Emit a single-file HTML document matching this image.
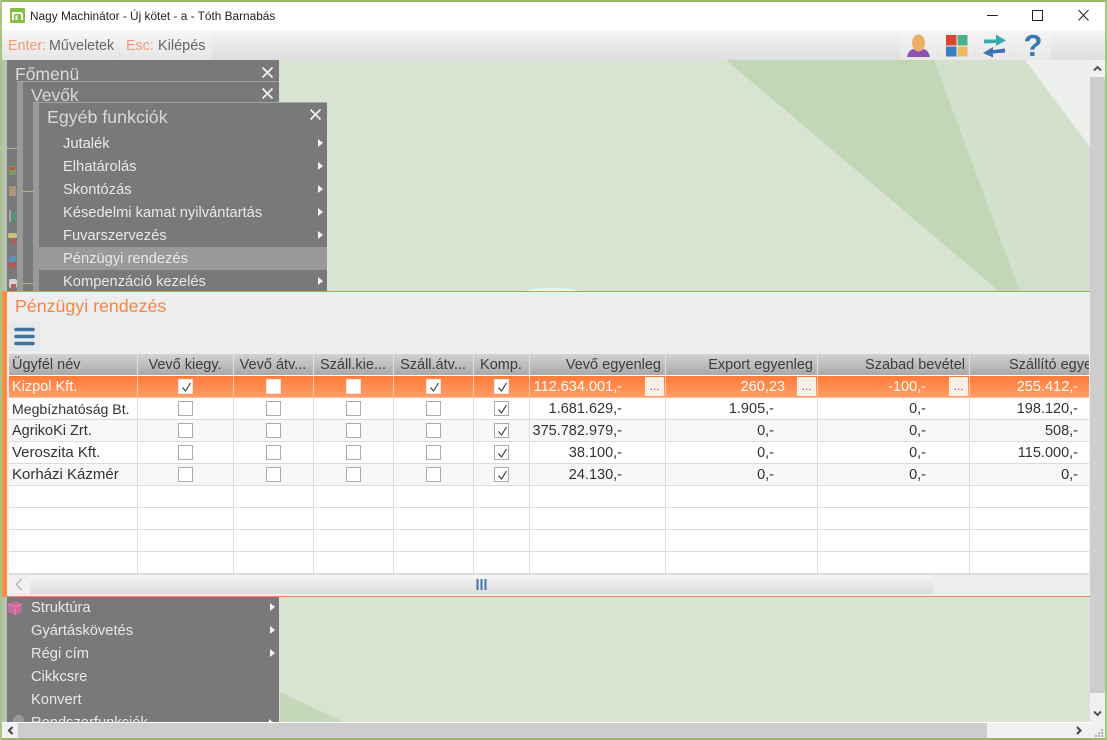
<!DOCTYPE html>
<html lang="hu">
<head>
<meta charset="utf-8">
<title>Nagy Machinátor</title>
<style>
*{box-sizing:border-box}
html,body{margin:0;padding:0;width:1107px;height:740px;overflow:hidden;background:#fff;font-family:"Liberation Sans",Arial,sans-serif}
.a{position:absolute}
#frame{position:absolute;left:0;top:0;width:1107px;height:740px;overflow:hidden;background:#fff}
.menu{position:absolute;background:#797979;overflow:hidden}
.hd{position:absolute;color:#d9d9d9;white-space:nowrap;line-height:20px}
.it{position:absolute;height:23px;line-height:23px;font-size:14.7px;color:#e8e8e8;white-space:nowrap}
.tri{position:absolute;width:0;height:0;border-left:5px solid #f4f4f4;border-top:4px solid transparent;border-bottom:4px solid transparent}
table{border-collapse:separate;border-spacing:0;table-layout:fixed;position:absolute;left:9px;top:354px;width:1080px;font-size:14.5px;color:#333}
th{height:22px;padding:0 4px 0 3px;font-weight:normal;color:#3d3d3d;background:linear-gradient(#d2d2d2,#a9a9a9);border-right:1px solid #e2e2e2;border-bottom:1px solid #fff;white-space:nowrap;overflow:hidden;text-align:center}
td{height:22px;padding:0;border-right:1px solid #dcdcdc;border-bottom:1px solid #dcdcdc;white-space:nowrap;overflow:hidden;background:#fff;position:relative}
tr.alt td{background:#f7f7f7}
tr.sel td{background:linear-gradient(#ff7b39,#ff9c66);color:#fff;border-right-color:#f8c8aa;border-bottom-color:#f4c0a0}
td.n{padding-left:3px}
td.c{text-align:center}
td.r{text-align:right;padding-right:43px}
.cb{display:block;width:15px;height:15px;margin:0 auto;border:1px solid #ababab;background:#fff;position:relative}
tr.sel .cb{border-color:#e8e8e8}
.cb svg{position:absolute;left:1px;top:1px}
.dot{position:absolute;right:1px;top:1px;width:19px;height:19px;background:#fcefe8;color:#666;font-size:12px;line-height:18px;text-align:center}
</style>
</head>
<body>
<div id="frame">
  <!-- desktop background -->
  <svg class="a" style="left:0;top:60px" width="1107" height="663" viewBox="0 60 1107 663">
    <rect x="0" y="60" width="1107" height="663" fill="#d8e3d2"/>
    <polygon points="934,60 1025,60 1090,147 1090,292 1020,292" fill="#d3e0cc"/>
    <polygon points="1025,60 1090,60 1090,147" fill="#ecefec"/>
    <polygon points="726,60 934,60 1020,292 1000,292" fill="#c2d7b6"/>
    <polygon points="280,692 344,722 280,722" fill="#c4d7b9"/>
    <ellipse cx="552" cy="293" rx="30" ry="5" fill="#faf3ea"/>
  </svg>

  <!-- title bar -->
  <div class="a" style="left:0;top:0;width:1107px;height:31px;background:#fff"></div>
  <svg class="a" style="left:10px;top:8px" width="15" height="15" viewBox="0 0 15 15">
    <rect width="15" height="15" rx="1" fill="#84bf41"/>
    <path d="M3 12V5h7q2 0 2 2v5M6.500 12V7.500" fill="none" stroke="#fff" stroke-width="2"/>
  </svg>
  <div class="a" style="left:30px;top:8px;font-size:11.850px;line-height:16px;color:#222;white-space:nowrap">Nagy Machinátor - Új kötet - a - Tóth Barnabás</div>
  <svg class="a" style="left:980px;top:5px" width="115" height="20" viewBox="0 0 115 20" fill="none" stroke="#222" stroke-width="1">
    <path d="M7 10.500H18"/>
    <rect x="52.500" y="5.500" width="10" height="10"/>
    <path d="M98.500 5L108.500 15.500M108.500 5L98.500 15.500"/>
  </svg>

  <!-- toolbar -->
  <div class="a" style="left:0;top:31px;width:1107px;height:29px;background:linear-gradient(#f4f4f4,#dedede)"></div>
  <div class="a" style="left:3px;top:31px;width:116px;height:29px;background:linear-gradient(#f6f6f6,#e6e6e6)"></div>
  <div class="a" style="left:120px;top:31px;width:92px;height:29px;background:linear-gradient(#f6f6f6,#e6e6e6)"></div>
  <div class="a" style="left:8px;top:38px;font-size:14.300px;line-height:16px;color:#f09a78;white-space:nowrap">Enter:</div>
  <div class="a" style="left:49px;top:38px;font-size:14.300px;line-height:16px;color:#666;white-space:nowrap">Műveletek</div>
  <div class="a" style="left:126px;top:38px;font-size:14.300px;line-height:16px;color:#f09a78;white-space:nowrap">Esc:</div>
  <div class="a" style="left:158px;top:38px;font-size:14.500px;line-height:16px;color:#666;white-space:nowrap">Kilépés</div>
  <div class="a" style="left:900px;top:31px;width:37px;height:29px;background:linear-gradient(#f5f5f5,#e7e7e7)"></div>
  <div class="a" style="left:938px;top:31px;width:37px;height:29px;background:linear-gradient(#f5f5f5,#e7e7e7)"></div>
  <div class="a" style="left:976px;top:31px;width:37px;height:29px;background:linear-gradient(#f5f5f5,#e7e7e7)"></div>
  <div class="a" style="left:1014px;top:31px;width:37px;height:29px;background:linear-gradient(#f5f5f5,#e7e7e7)"></div>
  <svg class="a" style="left:900px;top:31px" width="152" height="29" viewBox="900 31 152 29">
    <path d="M907 57q1-6 6-8l5 2 6-2q5 2 6 8z" fill="#9150b4"/>
    <ellipse cx="918.500" cy="43" rx="6.500" ry="8.500" fill="#edb062"/>
    <rect x="946" y="35" width="10.500" height="10.500" fill="#d9452e"/>
    <rect x="957.500" y="35" width="10" height="10.500" fill="#4cb08a"/>
    <rect x="946" y="46.500" width="10.500" height="10" fill="#3a80c0"/>
    <rect x="957.500" y="46.500" width="10" height="10" fill="#edb860"/>
    <path d="M984 39.500h12v-5l10 6-10 5.500v-3l-12 .5z" fill="#3aa9ae"/>
    <path d="M1005 48.500l-12 1.500v-3l-10 6 10 4.500v-4l12-1z" fill="#3a74b4"/>
  </svg>
  <div class="a" style="left:1023px;top:30px;width:20px;font-size:31px;font-weight:bold;line-height:32px;color:#3a78b8;text-align:center">?</div>

  <!-- left stacked menus -->
  <div class="a" style="left:2px;top:60px;width:5px;height:663px;background:#b9c0b6"></div>
  <div class="menu" style="left:7px;top:60px;width:272px;height:240px"></div>
  <div class="hd" style="left:15px;top:64px;font-size:17.500px">Főmenü</div>
  <div class="a" style="left:17px;top:81px;width:262px;height:1px;background:#a5a5a5"></div>
  <div class="a" style="left:17px;top:82px;width:6px;height:218px;background:#999"></div>
  <div class="hd" style="left:31px;top:85px;font-size:17.500px">Vevők</div>
  <div class="a" style="left:33px;top:102px;width:294px;height:1px;background:#a5a5a5"></div>
  <div class="a" style="left:33px;top:103px;width:6px;height:197px;background:#999"></div>
  <div class="menu" style="left:39px;top:103px;width:288px;height:188px"></div>
  <div class="hd" style="left:47px;top:107px;font-size:17.800px">Egyéb funkciók</div>
  <svg class="a" style="left:260px;top:65px" width="70" height="60" viewBox="260 65 70 60" fill="none" stroke="#f2f2f2" stroke-width="1.700">
    <path d="M262.500 67.500l10 10M272.500 67.500l-10 10"/>
    <path d="M262.500 88.500l10 10M272.500 88.500l-10 10"/>
    <path d="M310.500 109.500l10 10M320.500 109.500l-10 10"/>
  </svg>
  <div class="it" style="left:63px;top:133px">Jutalék</div>
  <div class="it" style="left:63px;top:156px">Elhatárolás</div>
  <div class="it" style="left:63px;top:179px">Skontózás</div>
  <div class="it" style="left:63px;top:202px">Késedelmi kamat nyilvántartás</div>
  <div class="it" style="left:63px;top:225px">Fuvarszervezés</div>
  <div class="a" style="left:39px;top:247px;width:288px;height:23px;background:#999"></div>
  <div class="it" style="left:63px;top:248px">Pénzügyi rendezés</div>
  <div class="it" style="left:63px;top:271px">Kompenzáció kezelés</div>
  <div class="tri" style="left:318px;top:139px"></div>
  <div class="tri" style="left:318px;top:162px"></div>
  <div class="tri" style="left:318px;top:185px"></div>
  <div class="tri" style="left:318px;top:208px"></div>
  <div class="tri" style="left:318px;top:231px"></div>
  <div class="tri" style="left:318px;top:277px"></div>
  <!-- faint menu icons and connector lines -->
  <svg class="a" style="left:7px;top:146px" width="26" height="146" viewBox="7 146 26 146">
    <path d="M7 148.500h10M23 191.500h10M23 283.500h10" stroke="#9ec48a" stroke-width="1"/>
    <rect x="9" y="166" width="7" height="9" rx="2" fill="#7f9a6a"/>
    <rect x="10" y="167" width="5" height="3" fill="#b5584a"/>
    <rect x="9" y="186" width="7" height="10" fill="#a8967a"/>
    <rect x="9" y="210" width="2" height="12" fill="#a0a8a0"/>
    <rect x="12" y="213" width="4" height="8" fill="#4f9a72"/>
    <rect x="8" y="233" width="9" height="5" rx="2" fill="#c5c080"/>
    <rect x="11" y="238" width="6" height="6" fill="#a85f5f"/>
    <rect x="9" y="256" width="7" height="6" fill="#5f90b0"/>
    <rect x="9" y="262" width="7" height="6" fill="#b05a5a"/>
    <rect x="9" y="279" width="8" height="9" rx="2" fill="#d4d4d4"/>
    <rect x="11" y="284" width="5" height="4" fill="#b46060"/>
  </svg>

  <!-- lower part of main menu -->
  <div class="menu" style="left:7px;top:597px;width:272px;height:125px"></div>
  <svg class="a" style="left:7px;top:600px" width="16" height="16" viewBox="0 0 16 16">
    <path d="M8 1l6.500 3v8L8 15l-7-3V4z" fill="#c86a9c"/>
    <path d="M1 4l7 3 6.500-3M8 7v8" fill="none" stroke="#e08ab8" stroke-width="1"/>
  </svg>
  <div class="it" style="left:31px;top:597px">Struktúra</div>
  <div class="it" style="left:31px;top:620px">Gyártáskövetés</div>
  <div class="it" style="left:31px;top:643px">Régi cím</div>
  <div class="it" style="left:31px;top:666px">Cikkcsre</div>
  <div class="it" style="left:31px;top:689px">Konvert</div>
  <div class="a" style="left:7px;top:712px;width:272px;height:10px;overflow:hidden">
    <div class="it" style="left:24px;top:0">Rendszerfunkciók</div>
    <div class="a" style="left:6px;top:3px;width:11px;height:11px;border-radius:50%;background:#9a9a9a"></div>
    <div class="tri" style="left:262px;top:7px"></div>
  </div>
  <div class="tri" style="left:270px;top:603px"></div>
  <div class="tri" style="left:270px;top:626px"></div>
  <div class="tri" style="left:270px;top:649px"></div>

  <!-- orange panel -->
  <div class="a" style="left:2px;top:291px;width:1088px;height:306px;background:#eeeeee"></div>
  <div class="a" style="left:2px;top:291px;width:1088px;height:1px;background:#f08a52"></div>
  <div class="a" style="left:7px;top:292px;width:1083px;height:1px;background:#f7f2ee"></div>
  <div class="a" style="left:2px;top:291px;width:5px;height:306px;background:#ff8c42"></div>
  <div class="a" style="left:15px;top:296px;font-size:17.800px;line-height:21px;color:#f78348;white-space:nowrap">Pénzügyi rendezés</div>
  <div class="a" style="left:9px;top:321px;width:31px;height:30px;background:#e7eaec"></div>
  <svg class="a" style="left:14px;top:327px" width="22" height="20" viewBox="0 0 22 20">
    <path d="M2 2.500h17M2 9.500h17M2 16.500h17" stroke="#3d6f9f" stroke-width="3.400" stroke-linecap="round"/>
  </svg>

  <!-- grid -->
  <table>
    <colgroup><col style="width:129px"><col style="width:96px"><col style="width:80px"><col style="width:80px"><col style="width:80px"><col style="width:56px"><col style="width:136px"><col style="width:152px"><col style="width:152px"><col style="width:119px"></colgroup>
    <tr>
      <th style="text-align:left">Ügyfél név</th>
      <th>Vevő kiegy.</th>
      <th>Vevő átv...</th>
      <th>Száll.kie...</th>
      <th>Száll.átv...</th>
      <th>Komp.</th>
      <th style="text-align:right">Vevő egyenleg</th>
      <th style="text-align:right">Export egyenleg</th>
      <th style="text-align:right">Szabad bevétel</th>
      <th style="text-align:right;padding-right:0;border-right:0;direction:ltr"><span style="display:inline-block;width:80px;overflow:hidden;text-align:left;vertical-align:top">Szállító egyenleg</span></th>
    </tr>
    <tr class="sel">
      <td class="n">Kizpol Kft.</td>
      <td class="c"><span class="cb"><svg width="13" height="13" viewBox="0 0 13 13"><path d="M2.500 6.500l3 3.500 5-8" fill="none" stroke="#333" stroke-width="1.100"/></svg></span></td>
      <td class="c"><span class="cb"></span></td>
      <td class="c"><span class="cb"></span></td>
      <td class="c"><span class="cb"><svg width="13" height="13" viewBox="0 0 13 13"><path d="M2.500 6.500l3 3.500 5-8" fill="none" stroke="#333" stroke-width="1.100"/></svg></span></td>
      <td class="c"><span class="cb"><svg width="13" height="13" viewBox="0 0 13 13"><path d="M2.500 6.500l3 3.500 5-8" fill="none" stroke="#333" stroke-width="1.100"/></svg></span></td>
      <td class="r">112.634.001,-<span class="dot">...</span></td>
      <td class="r" style="padding-right:32px">260,23<span class="dot">...</span></td>
      <td class="r">-100,-<span class="dot">...</span></td>
      <td class="r" style="padding-right:11px;border-right:0">255.412,-</td>
    </tr>
    <tr>
      <td class="n" style="font-size:14.100px">Megbízhatóság Bt.</td>
      <td class="c"><span class="cb"></span></td>
      <td class="c"><span class="cb"></span></td>
      <td class="c"><span class="cb"></span></td>
      <td class="c"><span class="cb"></span></td>
      <td class="c"><span class="cb"><svg width="13" height="13" viewBox="0 0 13 13"><path d="M2.500 6.500l3 3.500 5-8" fill="none" stroke="#333" stroke-width="1.100"/></svg></span></td>
      <td class="r">1.681.629,-</td>
      <td class="r">1.905,-</td>
      <td class="r">0,-</td>
      <td class="r" style="padding-right:11px;border-right:0">198.120,-</td>
    </tr>
    <tr class="alt">
      <td class="n">AgrikoKi Zrt.</td>
      <td class="c"><span class="cb"></span></td>
      <td class="c"><span class="cb"></span></td>
      <td class="c"><span class="cb"></span></td>
      <td class="c"><span class="cb"></span></td>
      <td class="c"><span class="cb"><svg width="13" height="13" viewBox="0 0 13 13"><path d="M2.500 6.500l3 3.500 5-8" fill="none" stroke="#333" stroke-width="1.100"/></svg></span></td>
      <td class="r">375.782.979,-</td>
      <td class="r">0,-</td>
      <td class="r">0,-</td>
      <td class="r" style="padding-right:11px;border-right:0">508,-</td>
    </tr>
    <tr>
      <td class="n" style="font-size:15px">Veroszita Kft.</td>
      <td class="c"><span class="cb"></span></td>
      <td class="c"><span class="cb"></span></td>
      <td class="c"><span class="cb"></span></td>
      <td class="c"><span class="cb"></span></td>
      <td class="c"><span class="cb"><svg width="13" height="13" viewBox="0 0 13 13"><path d="M2.500 6.500l3 3.500 5-8" fill="none" stroke="#333" stroke-width="1.100"/></svg></span></td>
      <td class="r">38.100,-</td>
      <td class="r">0,-</td>
      <td class="r">0,-</td>
      <td class="r" style="padding-right:11px;border-right:0">115.000,-</td>
    </tr>
    <tr class="alt">
      <td class="n" style="font-size:15px">Korházi Kázmér</td>
      <td class="c"><span class="cb"></span></td>
      <td class="c"><span class="cb"></span></td>
      <td class="c"><span class="cb"></span></td>
      <td class="c"><span class="cb"></span></td>
      <td class="c"><span class="cb"><svg width="13" height="13" viewBox="0 0 13 13"><path d="M2.500 6.500l3 3.500 5-8" fill="none" stroke="#333" stroke-width="1.100"/></svg></span></td>
      <td class="r">24.130,-</td>
      <td class="r">0,-</td>
      <td class="r">0,-</td>
      <td class="r" style="padding-right:11px;border-right:0">0,-</td>
    </tr>
    <tr><td></td><td></td><td></td><td></td><td></td><td></td><td></td><td></td><td></td><td style="border-right:0"></td></tr>
    <tr><td></td><td></td><td></td><td></td><td></td><td></td><td></td><td></td><td></td><td style="border-right:0"></td></tr>
    <tr><td></td><td></td><td></td><td></td><td></td><td></td><td></td><td></td><td></td><td style="border-right:0"></td></tr>
    <tr><td></td><td></td><td></td><td></td><td></td><td></td><td></td><td></td><td></td><td style="border-right:0"></td></tr>
  </table>

  <!-- grid horizontal scrollbar -->
  <div class="a" style="left:9px;top:574px;width:1080px;height:1px;background:#dcdcdc"></div>
  <div class="a" style="left:9px;top:575px;width:20px;height:19px;background:#f0f0f0"></div>
  <div class="a" style="left:30px;top:575px;width:903px;height:19px;background:linear-gradient(#f5f5f5,#dcdcdc)"></div>
  <svg class="a" style="left:14px;top:577px" width="10" height="15" viewBox="0 0 10 15">
    <path d="M7.500 2L2.500 7.500l5 5.500" fill="none" stroke="#b4b4b4" stroke-width="1.400"/>
  </svg>
  <svg class="a" style="left:476px;top:579px" width="11" height="11" viewBox="0 0 11 11">
    <path d="M1.500 0v11M5.500 0v11M9.500 0v11" stroke="#3f74ae" stroke-width="2"/>
  </svg>
  <div class="a" style="left:2px;top:596px;width:1088px;height:1px;background:#e98a60"></div>
  <div class="a" style="left:279px;top:597px;width:811px;height:1px;background:#eadcc0"></div>

  <!-- window scrollbars -->
  <div class="a" style="left:1090px;top:60px;width:15px;height:663px;background:#f0f0f0"></div>
  <div class="a" style="left:1090px;top:77px;width:15px;height:616px;background:#cdcdcd"></div>
  <svg class="a" style="left:1090px;top:62px" width="15" height="12" viewBox="0 0 15 12">
    <path d="M4 8.500l3.500-3.500 3.500 3.500" fill="none" stroke="#555" stroke-width="2"/>
  </svg>
  <svg class="a" style="left:1090px;top:708px" width="15" height="12" viewBox="0 0 15 12">
    <path d="M4 3.500l3.500 3.500 3.500-3.500" fill="none" stroke="#555" stroke-width="2"/>
  </svg>
  <div class="a" style="left:0;top:722px;width:1090px;height:1px;background:#fff"></div>
  <div class="a" style="left:2px;top:723px;width:1103px;height:15px;background:#f0f0f0"></div>
  <div class="a" style="left:18px;top:723px;width:969px;height:15px;background:#cdcdcd"></div>
  <svg class="a" style="left:4px;top:724px" width="12" height="13" viewBox="0 0 12 13">
    <path d="M8.500 3L5 6.500 8.500 10" fill="none" stroke="#444" stroke-width="2"/>
  </svg>
  <svg class="a" style="left:1073px;top:724px" width="12" height="13" viewBox="0 0 12 13">
    <path d="M4 3l3.500 3.500L4 10" fill="none" stroke="#444" stroke-width="2"/>
  </svg>
  <svg class="a" style="left:1094px;top:728px" width="10" height="10" viewBox="0 0 10 10" fill="#b4b4b4">
    <rect x="7" y="1" width="2" height="2"/><rect x="4" y="4" width="2" height="2"/><rect x="7" y="4" width="2" height="2"/><rect x="1" y="7" width="2" height="2"/><rect x="4" y="7" width="2" height="2"/><rect x="7" y="7" width="2" height="2"/>
  </svg>

  <!-- window border -->
  <div class="a" style="left:0;top:0;width:1107px;height:2px;background:#93b868"></div>
  <div class="a" style="left:0;top:738px;width:1107px;height:2px;background:#93b868"></div>
  <div class="a" style="left:0;top:0;width:2px;height:740px;background:#a7c685"></div>
  <div class="a" style="left:1105px;top:0;width:2px;height:740px;background:#a7c685"></div>
</div>
</body>
</html>
